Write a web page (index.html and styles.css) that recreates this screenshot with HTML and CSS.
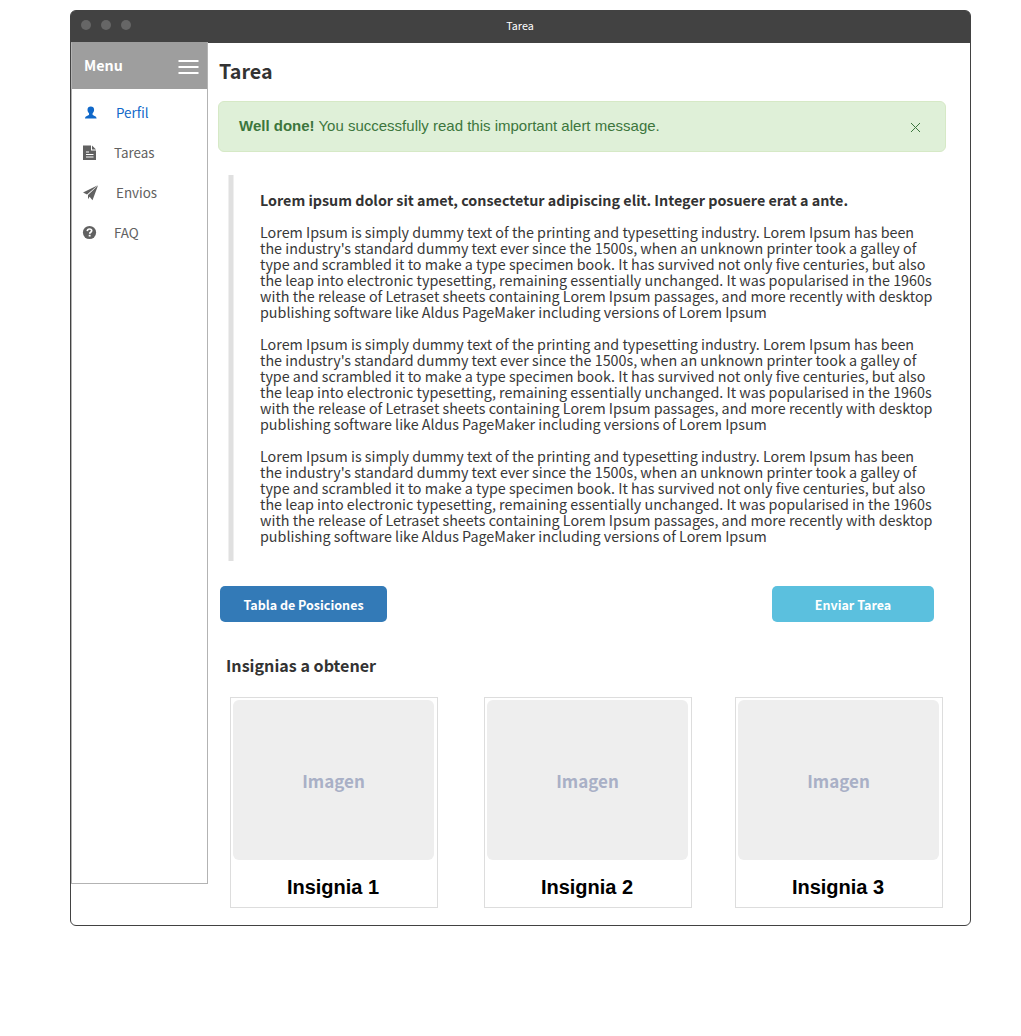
FILE: index.html
```html
<!DOCTYPE html>
<html lang="es">
<head>
<meta charset="utf-8">
<title>Tarea</title>
<link rel="stylesheet" href="styles.css">
</head>
<body>
<div class="window">
  <header class="titlebar">
    <div class="dots"><i></i><i></i><i></i></div>
    <span class="caption">Tarea</span>
  </header>
  <div class="body">
    <aside class="sidebar">
      <div class="menu-head">
        <span>Menu</span>
        <svg width="21" height="16" viewBox="0 0 21 16"><path d="M.5 2h20M.5 8h20M.5 14h20" stroke="#fff" stroke-width="2"/></svg>
      </div>
      <nav class="menu">
        <a class="item active wide"><svg width="16" height="16" viewBox="0 0 16 16"><path d="M8.800 1.500c2 0 3.300 1.200 3.300 3.200 0 1.500-.6 2.700-1.500 3.500v1.600c0 .9 3.800 1 4 3.700H3c.2-2.700 4-2.800 4-3.700V8.200c-.9-.8-1.500-2-1.500-3.500C5.500 2.700 6.800 1.500 8.800 1.500z"/></svg><span>Perfil</span></a>
        <a class="item"><svg width="16" height="16" viewBox="0 0 16 16"><path fill-rule="evenodd" d="M1 .5h8v5h5V15H1zM10 .5 14 4.500h-4zM4 6.500h3v1H4zM4 9h7.500v1H4zM4 11.500h7.500v1H4z"/></svg><span>Tareas</span></a>
        <a class="item wide"><svg width="16" height="16" viewBox="0 0 16 16"><path d="M15.800.3 1 7.500l4 2zM16 .5 6 10.100v4.200l1.600-2.600 2.900 3.600z"/></svg><span>Envios</span></a>
        <a class="item"><svg width="16" height="16" viewBox="0 0 16 16"><circle cx="7.500" cy="7.500" r="6.600"/><path d="M5.300 6.100C5.400 4.600 6.300 4 7.500 4c1.300 0 2.200.7 2.200 1.800 0 1.400-2 1.500-2 3" fill="none" stroke="#fff" stroke-width="1.700"/><path d="M6.700 9.800h1.900v1.700H6.700z" fill="#fff"/></svg><span>FAQ</span></a>
      </nav>
    </aside>
    <main class="main">
      <h1 class="title">Tarea</h1>
      <div class="alert">
        <span><b>Well done!</b> You successfully read this important alert message.</span>
        <svg width="10" height="10" viewBox="0 0 10 10"><path d="M1 0l9 9M10 0L1 9" stroke="#3c763d" stroke-width="1"/></svg>
      </div>
      <blockquote class="quote">
        <p class="lead">Lorem ipsum dolor sit amet, consectetur adipiscing elit. Integer posuere erat a ante.</p>
        <p>Lorem Ipsum is simply dummy text of the printing and typesetting industry. Lorem Ipsum has been<br>the industry's standard dummy text ever since the 1500s, when an unknown printer took a galley of<br>type and scrambled it to make a type specimen book. It has survived not only five centuries, but also<br>the leap into electronic typesetting, remaining essentially unchanged. It was popularised in the 1960s<br>with the release of Letraset sheets containing Lorem Ipsum passages, and more recently with desktop<br>publishing software like Aldus PageMaker including versions of Lorem Ipsum</p>
        <p>Lorem Ipsum is simply dummy text of the printing and typesetting industry. Lorem Ipsum has been<br>the industry's standard dummy text ever since the 1500s, when an unknown printer took a galley of<br>type and scrambled it to make a type specimen book. It has survived not only five centuries, but also<br>the leap into electronic typesetting, remaining essentially unchanged. It was popularised in the 1960s<br>with the release of Letraset sheets containing Lorem Ipsum passages, and more recently with desktop<br>publishing software like Aldus PageMaker including versions of Lorem Ipsum</p>
        <p>Lorem Ipsum is simply dummy text of the printing and typesetting industry. Lorem Ipsum has been<br>the industry's standard dummy text ever since the 1500s, when an unknown printer took a galley of<br>type and scrambled it to make a type specimen book. It has survived not only five centuries, but also<br>the leap into electronic typesetting, remaining essentially unchanged. It was popularised in the 1960s<br>with the release of Letraset sheets containing Lorem Ipsum passages, and more recently with desktop<br>publishing software like Aldus PageMaker including versions of Lorem Ipsum</p>
      </blockquote>
      <div class="actions">
        <a class="btn primary">Tabla de Posiciones</a>
        <a class="btn info">Enviar Tarea</a>
      </div>
      <h2 class="subtitle">Insignias a obtener</h2>
      <div class="badges">
        <div class="card"><div class="image">Imagen</div><div class="name">Insignia 1</div></div>
        <div class="card"><div class="image">Imagen</div><div class="name">Insignia 2</div></div>
        <div class="card"><div class="image">Imagen</div><div class="name">Insignia 3</div></div>
      </div>
    </main>
  </div>
</div>
</body>
</html>
```
FILE: styles.css
```css
* { box-sizing: border-box; }
body {
  margin: 0;
  padding: 10px 0 0 70px;
  background: #fff;
  color: #333;
  font-family: "Noto Sans CJK SC", sans-serif;
  white-space: nowrap;
}
h1, h2, p, blockquote { margin: 0; }
svg { display: block; flex: none; overflow: visible; }
.window {
  width: 901px;
  height: 916px;
  border: 1px solid #424242;
  border-radius: 6px;
  background: #fff;
}
.titlebar {
  display: grid;
  grid-template-columns: 1fr auto 1fr;
  height: 32px;
  background: #424242;
  border-radius: 4px 4px 0 0;
}
.dots { display: flex; gap: 10px; padding: 9px 0 0 10.4px; }
.dots i { width: 10px; height: 10px; border-radius: 50%; background: #666; }
.caption { color: #fff; font-size: 10.73px; line-height: 30px; padding-right: 1px; }
.body { display: flex; align-items: flex-start; }
.sidebar {
  width: 137px;
  height: 842px;
  margin-top: -1px;
  border: 1px solid #b3b3b3;
  border-top-color: #9e9e9e;
}
.menu-head {
  display: flex;
  justify-content: space-between;
  height: 46px;
  padding: 0 8px 0 12px;
  background: #9e9e9e;
  color: #fff;
  font-size: 14.31px;
  font-weight: bold;
  line-height: 44px;
}
.menu-head svg { margin-top: 16px; }
.menu { padding: 4px 0 0 10px; }
.item {
  display: flex;
  align-items: center;
  gap: 16px;
  height: 40px;
  color: #616161;
  fill: #616161;
  font-size: 13.42px;
}
.item span { line-height: 20px; padding-bottom: 3px; }
.item.wide { gap: 18px; }
.item.active { color: #1068c9; fill: #1068c9; }
.main { flex: 1; padding: 12px 0 0 10px; }
.title { padding-left: 1px; font-size: 19.68px; line-height: 32px; }
.alert {
  display: flex;
  justify-content: space-between;
  width: 728px;
  height: 51px;
  margin-top: 14px;
  padding: 0 25px 0 20px;
  border: 1px solid #d6e9c6;
  border-radius: 6px;
  background: #dff0d8;
  color: #3c763d;
  font: 15px/47px "Liberation Sans", Arial, sans-serif;
}
.alert svg { margin-top: 21px; }
.quote {
  width: 720px;
  height: 386px;
  margin: 23px 0 0 10px;
  padding: 17px 0 0 32px;
  background: linear-gradient(90deg, #efefef 1px, #e0e0e0 1px 5px, #efefef 5px 6px, transparent 6px);
  color: #383838;
  font-size: 14.32px;
  line-height: 16px;
}
.quote p { margin-bottom: 16px; }
.quote .lead { font-weight: bold; color: #333; }
.actions {
  display: flex;
  justify-content: space-between;
  width: 714px;
  margin: 25px 0 0 2px;
}
.btn {
  width: 167px;
  height: 36px;
  border-radius: 5px;
  color: #fff;
  font-size: 12.52px;
  font-weight: bold;
  line-height: 37px;
  text-align: center;
}
.primary { background: #337ab7; }
.info { width: 162px; background: #5bc0de; }
.subtitle { margin: 31px 0 0 8px; font-size: 16.1px; line-height: 24px; }
.badges { display: flex; gap: 46px; margin: 20px 0 0 12px; }
.card {
  width: 208px;
  height: 211px;
  padding: 2px;
  border: 1px solid #ddd;
}
.card:last-child { margin-left: -3px; }
.image {
  width: 201px;
  height: 160px;
  border-radius: 6px;
  background: #eee;
  color: #a9b0c6;
  font-size: 17px;
  font-weight: bold;
  line-height: 162px;
  text-align: center;
}
.name {
  padding-right: 2px;
  color: #000;
  font: bold 20px/54px "Liberation Sans", Arial, sans-serif;
  text-align: center;
}
```
